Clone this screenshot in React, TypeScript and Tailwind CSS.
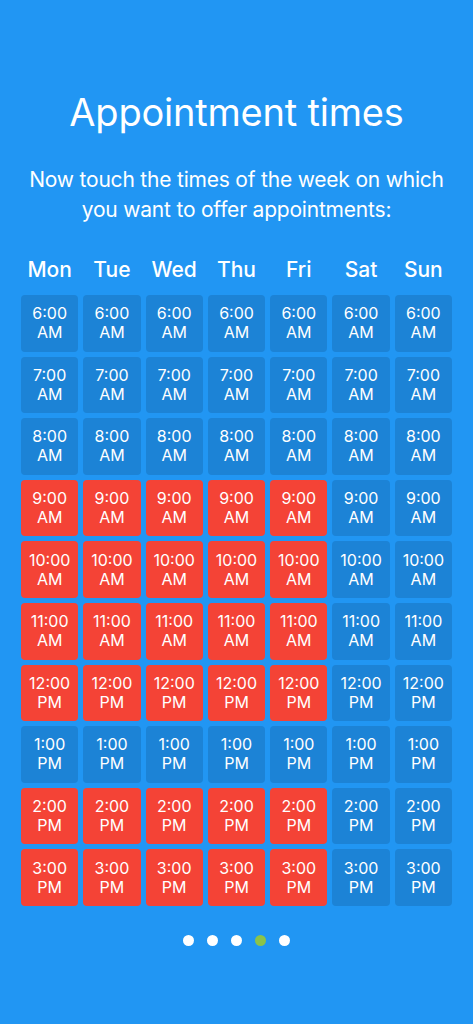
const days = ["Mon", "Tue", "Wed", "Thu", "Fri", "Sat", "Sun"];

const times = [
  { time: "6:00", period: "AM", on: false },
  { time: "7:00", period: "AM", on: false },
  { time: "8:00", period: "AM", on: false },
  { time: "9:00", period: "AM", on: true },
  { time: "10:00", period: "AM", on: true },
  { time: "11:00", period: "AM", on: true },
  { time: "12:00", period: "PM", on: true },
  { time: "1:00", period: "PM", on: false },
  { time: "2:00", period: "PM", on: true },
  { time: "3:00", period: "PM", on: true },
];

export default function App() {
  return (
    <div
      className="w-[473px] h-[1024px] bg-[#2196f3] text-white flex flex-col items-center"
      style={{ fontFamily: "Inter, 'Noto Sans', sans-serif" }}
    >
      <h1 className="mt-[87px] text-[38px] leading-[50px] font-normal tracking-[-0.2px]">
        Appointment times
      </h1>
      <p className="mt-[28px] px-6 text-center text-[21px] leading-[30px] tracking-[-0.2px]">
        Now touch the times of the week on which
        <br />
        you want to offer appointments:
      </p>

      <div className="mt-[31px] w-[431px] grid grid-cols-7 gap-x-[5px]">
        {days.map((d) => (
          <div key={d} className="text-center text-[21px] leading-[28px] font-medium">
            {d}
          </div>
        ))}
      </div>

      <div className="mt-[11px] w-[431px] h-[611px] grid grid-cols-7 grid-rows-10 gap-[5px]">
        {times.map((t) =>
          days.map((d, i) => {
            const red = t.on && i < 5;
            return (
              <div
                key={d + t.time}
                className={
                  red
                    ? "rounded-[4px] bg-[#f44336] flex flex-col items-center justify-center text-[16px] leading-[19px]"
                    : "rounded-[4px] bg-[#1c83d6] flex flex-col items-center justify-center text-[16px] leading-[19px]"
                }
              >
                <span>{t.time}</span>
                <span>{t.period}</span>
              </div>
            );
          })
        )}
      </div>

      <div className="mt-[29px] flex items-center gap-[13px]">
        <span className="w-[11px] h-[11px] rounded-full bg-white" />
        <span className="w-[11px] h-[11px] rounded-full bg-white" />
        <span className="w-[11px] h-[11px] rounded-full bg-white" />
        <span className="w-[11px] h-[11px] rounded-full bg-[#8bc34a]" />
        <span className="w-[11px] h-[11px] rounded-full bg-white" />
      </div>
    </div>
  );
}
